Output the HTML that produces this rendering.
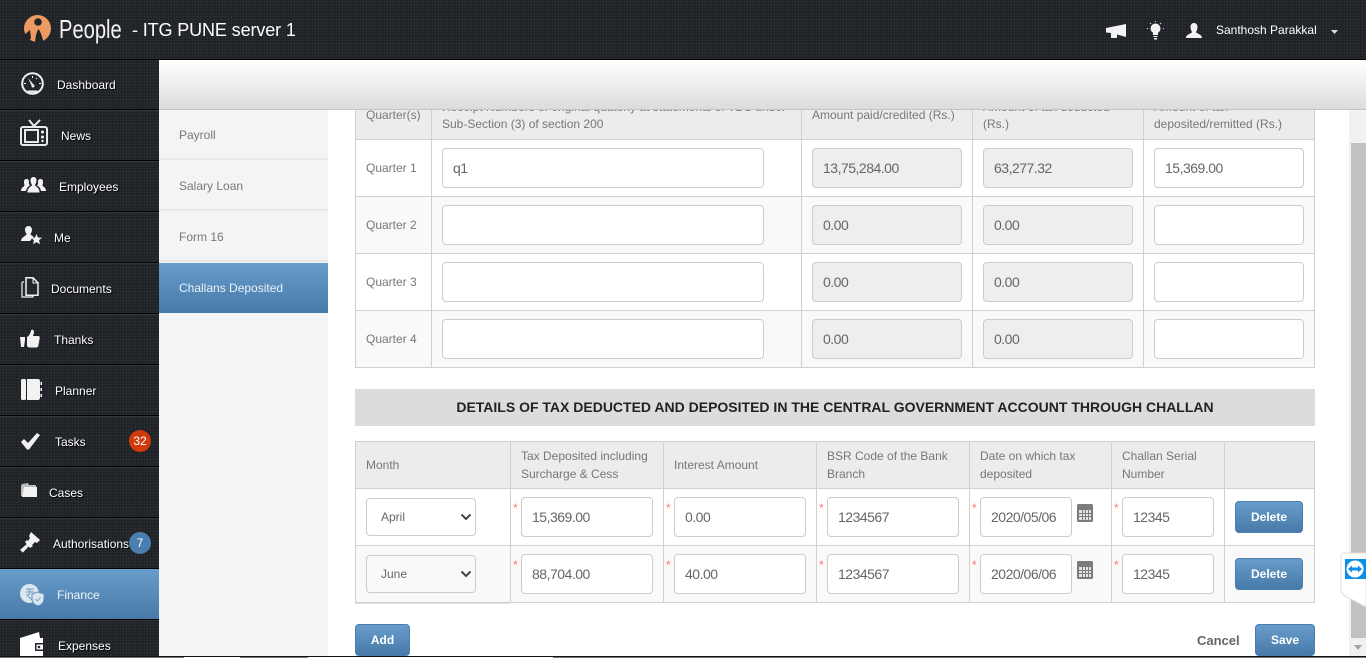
<!DOCTYPE html>
<html><head><meta charset="utf-8"><title>People</title>
<style>
*{box-sizing:border-box}
html,body{margin:0;padding:0;width:1366px;height:658px;overflow:hidden;background:#fff;font-family:"Liberation Sans",Arial,sans-serif}
.a{position:absolute}
#hd{left:0;top:0;width:1366px;height:60px;border-bottom:1px solid #000}
.tex{background-color:#212429;background-image:repeating-linear-gradient(0deg,rgba(255,255,255,.025) 0 1px,rgba(0,0,0,.07) 1px 2px,transparent 2px 3px),repeating-linear-gradient(90deg,rgba(255,255,255,.025) 0 1px,rgba(0,0,0,.07) 1px 2px,transparent 2px 3px)}
.it{left:0;width:159px;height:51px;border-bottom:1px solid #000;border-top:1px solid #33363b}
.lb{position:absolute;color:#fff;font-size:12px;line-height:14px;white-space:nowrap;text-shadow:1px 1px 1px #000}
.ic{position:absolute;fill:#f2f2f2}
.sn{left:159px;width:169px;height:50px;background:#f4f4f4;border-bottom:2px solid #e8e8e8;color:#777;font-size:12px;line-height:51px;padding-left:20px}
.blue{background:linear-gradient(#689cca,#477aa9)}
.t{position:absolute;color:#777;font-size:12px;line-height:18px;white-space:nowrap}
.inp{position:absolute;height:40px;background:#fff;border:1px solid #ccc;border-radius:4px;color:#666;font-size:14px;letter-spacing:-.5px;line-height:39px;padding-left:10px;white-space:nowrap}
.dis{background:#eee}
.st{position:absolute;color:#f77;font-size:12px;line-height:12px}
.btn{position:absolute;background:linear-gradient(#689cca,#477aa9);border:1px solid #4a7fb0;border-radius:4px;color:#fff;font-weight:bold;font-size:12px;text-align:center}
.bdg{position:absolute;left:129px;width:22px;height:22px;border-radius:50%;color:#fff;font-size:12px;line-height:22px;text-align:center}
.sel{letter-spacing:0;font-size:12px;line-height:36px;height:38px;padding-left:14px;width:110px;left:366px}
</style></head><body>

<!-- main content -->
<div class="a" style="left:328px;top:110px;width:1038px;height:546px;background:#fff"></div>

<!-- table 1 -->
<div class="a" style="left:355px;top:110px;width:960px;height:29px;background:#ececec"></div>
<div class="t" style="left:366px;top:106px">Quarter(s)</div>
<div class="t" style="left:442px;top:98px">Receipt Numbers of original quaterly at statements of TDS under</div>
<div class="t" style="left:442px;top:115px">Sub-Section (3) of section 200</div>
<div class="t" style="left:812px;top:106px">Amount paid/credited (Rs.)</div>
<div class="t" style="left:983px;top:98px">Amount of tax deducted</div>
<div class="t" style="left:983px;top:115px">(Rs.)</div>
<div class="t" style="left:1154px;top:98px">Amount of tax</div>
<div class="t" style="left:1154px;top:115px">deposited/remitted (Rs.)</div>

<div class="a" style="left:355px;top:196px;width:960px;height:57px;background:#f9f9f9"></div>
<div class="a" style="left:355px;top:310px;width:960px;height:57px;background:#f9f9f9"></div>
<div class="a" style="left:355px;top:139px;width:960px;height:1px;background:#d0d0d0"></div>
<div class="a" style="left:355px;top:196px;width:960px;height:1px;background:#d0d0d0"></div>
<div class="a" style="left:355px;top:253px;width:960px;height:1px;background:#d0d0d0"></div>
<div class="a" style="left:355px;top:310px;width:960px;height:1px;background:#d0d0d0"></div>
<div class="a" style="left:355px;top:367px;width:960px;height:1px;background:#d0d0d0"></div>
<div class="a" style="left:355px;top:110px;width:1px;height:258px;background:#d0d0d0"></div>
<div class="a" style="left:431px;top:110px;width:1px;height:258px;background:#d0d0d0"></div>
<div class="a" style="left:801px;top:110px;width:1px;height:258px;background:#d0d0d0"></div>
<div class="a" style="left:972px;top:110px;width:1px;height:258px;background:#d0d0d0"></div>
<div class="a" style="left:1143px;top:110px;width:1px;height:258px;background:#d0d0d0"></div>
<div class="a" style="left:1314px;top:110px;width:1px;height:258px;background:#d0d0d0"></div>

<div class="t" style="left:366px;top:159px">Quarter 1</div>
<div class="t" style="left:366px;top:216px">Quarter 2</div>
<div class="t" style="left:366px;top:273px">Quarter 3</div>
<div class="t" style="left:366px;top:330px">Quarter 4</div>

<div class="inp" style="left:442px;top:148px;width:322px">q1</div>
<div class="inp dis" style="left:812px;top:148px;width:150px">13,75,284.00</div>
<div class="inp dis" style="left:983px;top:148px;width:150px">63,277.32</div>
<div class="inp" style="left:1154px;top:148px;width:150px">15,369.00</div>
<div class="inp" style="left:442px;top:205px;width:322px"></div>
<div class="inp dis" style="left:812px;top:205px;width:150px">0.00</div>
<div class="inp dis" style="left:983px;top:205px;width:150px">0.00</div>
<div class="inp" style="left:1154px;top:205px;width:150px"></div>
<div class="inp" style="left:442px;top:262px;width:322px"></div>
<div class="inp dis" style="left:812px;top:262px;width:150px">0.00</div>
<div class="inp dis" style="left:983px;top:262px;width:150px">0.00</div>
<div class="inp" style="left:1154px;top:262px;width:150px"></div>
<div class="inp" style="left:442px;top:319px;width:322px"></div>
<div class="inp dis" style="left:812px;top:319px;width:150px">0.00</div>
<div class="inp dis" style="left:983px;top:319px;width:150px">0.00</div>
<div class="inp" style="left:1154px;top:319px;width:150px"></div>

<!-- banner -->
<div class="a" style="left:355px;top:389px;width:960px;height:37px;background:#dcdcdc;color:#222;font-weight:bold;font-size:14px;line-height:37px;text-align:center;white-space:nowrap">DETAILS OF TAX DEDUCTED AND DEPOSITED IN THE CENTRAL GOVERNMENT ACCOUNT THROUGH CHALLAN</div>

<!-- table 2 -->
<div class="a" style="left:355px;top:441px;width:960px;height:47px;background:#ececec"></div>
<div class="a" style="left:355px;top:545px;width:960px;height:57px;background:#f9f9f9"></div>
<div class="a" style="left:355px;top:441px;width:960px;height:1px;background:#d0d0d0"></div>
<div class="a" style="left:355px;top:488px;width:960px;height:1px;background:#d0d0d0"></div>
<div class="a" style="left:355px;top:545px;width:960px;height:1px;background:#d0d0d0"></div>
<div class="a" style="left:355px;top:602px;width:960px;height:1px;background:#d0d0d0"></div>
<div class="a" style="left:355px;top:603px;width:155px;height:1px;background:#e2e2e2"></div>
<div class="a" style="left:355px;top:441px;width:1px;height:162px;background:#d0d0d0"></div>
<div class="a" style="left:510px;top:441px;width:1px;height:162px;background:#d0d0d0"></div>
<div class="a" style="left:663px;top:441px;width:1px;height:162px;background:#d0d0d0"></div>
<div class="a" style="left:816px;top:441px;width:1px;height:162px;background:#d0d0d0"></div>
<div class="a" style="left:969px;top:441px;width:1px;height:162px;background:#d0d0d0"></div>
<div class="a" style="left:1111px;top:441px;width:1px;height:162px;background:#d0d0d0"></div>
<div class="a" style="left:1224px;top:441px;width:1px;height:162px;background:#d0d0d0"></div>
<div class="a" style="left:1314px;top:441px;width:1px;height:162px;background:#d0d0d0"></div>

<div class="t" style="left:366px;top:456px">Month</div>
<div class="t" style="left:521px;top:447px">Tax Deposited including</div>
<div class="t" style="left:521px;top:465px">Surcharge &amp; Cess</div>
<div class="t" style="left:674px;top:456px">Interest Amount</div>
<div class="t" style="left:827px;top:447px">BSR Code of the Bank</div>
<div class="t" style="left:827px;top:465px">Branch</div>
<div class="t" style="left:980px;top:447px">Date on which tax</div>
<div class="t" style="left:980px;top:465px">deposited</div>
<div class="t" style="left:1122px;top:447px">Challan Serial</div>
<div class="t" style="left:1122px;top:465px">Number</div>

<!-- row 1 -->
<div class="inp sel" style="top:498px;background:#fff">April<svg class="a" style="left:93px;top:14px" width="12" height="8" viewBox="0 0 12 8"><path d="M1.500 1.500L6 6l4.500-4.500" fill="none" stroke="#444" stroke-width="2"/></svg></div>
<div class="st" style="left:513px;top:502px">*</div><div class="inp" style="left:521px;top:497px;width:132px">15,369.00</div>
<div class="st" style="left:666px;top:502px">*</div><div class="inp" style="left:674px;top:497px;width:132px">0.00</div>
<div class="st" style="left:819px;top:502px">*</div><div class="inp" style="left:827px;top:497px;width:132px">1234567</div>
<div class="st" style="left:972px;top:502px">*</div><div class="inp" style="left:980px;top:497px;width:92px">2020/05/06</div>
<svg class="a" style="left:1077px;top:504px" width="16" height="18" viewBox="0 0 16 18"><rect width="16" height="18" rx="1.500" fill="#7c7c7c"/><g fill="#e4e4e4"><rect x="2" y="6" width="12" height="10"/></g><g stroke="#7c7c7c" stroke-width="1"><path d="M5.500 6v10M8.500 6v10M11.500 6v10M2 9.500h12M2 12.500h12"/></g></svg>
<div class="st" style="left:1114px;top:502px">*</div><div class="inp" style="left:1122px;top:497px;width:92px">12345</div>
<div class="btn" style="left:1235px;top:501px;width:68px;height:32px;line-height:30px">Delete</div>

<!-- row 2 -->
<div class="inp sel" style="top:555px;background:#f9f9f9">June<svg class="a" style="left:93px;top:14px" width="12" height="8" viewBox="0 0 12 8"><path d="M1.500 1.500L6 6l4.500-4.500" fill="none" stroke="#444" stroke-width="2"/></svg></div>
<div class="st" style="left:513px;top:559px">*</div><div class="inp" style="left:521px;top:554px;width:132px">88,704.00</div>
<div class="st" style="left:666px;top:559px">*</div><div class="inp" style="left:674px;top:554px;width:132px">40.00</div>
<div class="st" style="left:819px;top:559px">*</div><div class="inp" style="left:827px;top:554px;width:132px">1234567</div>
<div class="st" style="left:972px;top:559px">*</div><div class="inp" style="left:980px;top:554px;width:92px">2020/06/06</div>
<svg class="a" style="left:1077px;top:561px" width="16" height="18" viewBox="0 0 16 18"><rect width="16" height="18" rx="1.500" fill="#7c7c7c"/><g fill="#e4e4e4"><rect x="2" y="6" width="12" height="10"/></g><g stroke="#7c7c7c" stroke-width="1"><path d="M5.500 6v10M8.500 6v10M11.500 6v10M2 9.500h12M2 12.500h12"/></g></svg>
<div class="st" style="left:1114px;top:559px">*</div><div class="inp" style="left:1122px;top:554px;width:92px">12345</div>
<div class="btn" style="left:1235px;top:558px;width:68px;height:32px;line-height:30px">Delete</div>

<div class="btn" style="left:355px;top:624px;width:55px;height:32px;line-height:30px">Add</div>
<div class="a" style="left:1197px;top:632px;color:#666;font-weight:bold;font-size:13px;line-height:18px">Cancel</div>
<div class="btn" style="left:1255px;top:624px;width:60px;height:32px;line-height:30px">Save</div>

<!-- top bar -->
<div class="a" style="left:159px;top:60px;width:1207px;height:50px;background:linear-gradient(#fff,#dcdcdc);border-bottom:1px solid #c4c4c4"></div>

<!-- scrollbar -->
<div class="a" style="left:1349px;top:110px;width:17px;height:546px;background:#f1f1f1"></div>
<div class="a" style="left:1351px;top:143px;width:15px;height:495px;background:#c1c1c1"></div>
<svg class="a" style="left:1351px;top:644px" width="15" height="8"><path d="M3 1h8L7 6z" fill="#a3a3a3"/></svg>

<!-- teamviewer tab -->
<svg class="a" style="left:1340px;top:552px" width="26" height="56" viewBox="0 0 26 56"><path d="M26 1H4Q1 1 1 4V40L5 44 26 55z" fill="#fff" stroke="#ddd"/><rect x="5" y="7" width="21" height="20" fill="#0e8ee9"/><circle cx="15" cy="17" r="8.500" fill="#fff"/><path d="M8 17l4-3.500v2h6v-2l4 3.500-4 3.500v-2h-6v2z" fill="#0e8ee9"/></svg>

<!-- header -->
<div id="hd" class="a tex">
<svg class="a" style="left:24px;top:15px" width="27" height="27" viewBox="0 0 27 27"><circle cx="13.500" cy="13.500" r="13.500" fill="#ee9a63"/><circle cx="14" cy="7" r="3.800" fill="#212429"/><path d="M0 20L6 15 7 23 4 27H0z" fill="#212429"/><path d="M11 27Q12 17 14.500 14 17 17 19.500 27z" fill="#212429"/></svg>
<div class="a" style="left:59px;top:14px;color:#f2f2f2;font-size:26px;line-height:30px;transform:scaleX(.775);transform-origin:0 0">People</div>
<div class="a" style="left:132px;top:19px;color:#fff;font-size:18px;line-height:22px;white-space:nowrap;letter-spacing:-.12px">- ITG PUNE server 1</div>
<svg class="a" style="left:1106px;top:24px" width="21" height="15" viewBox="0 0 21 15"><path fill="#f2f2f2" d="M0 4l20-4v13L11 10.500V14H5V9L0 8.500z"/></svg>
<svg class="a" style="left:1147px;top:21px" width="17" height="20" viewBox="0 0 17 20"><circle cx="8.500" cy="7.500" r="5" fill="#f2f2f2"/><path d="M6 11h5v3H6zM6.500 15h4v1h-4zM7 17h3v1.500H7z" fill="#f2f2f2"/><path d="M8.500 0v1M1 7.500H0M17 7.500h-1M3 2l1 1M14 2l-1 1" stroke="#ddd"/></svg>
<svg class="a" style="left:1186px;top:23px" width="16" height="15" viewBox="0 0 16 15"><path fill="#f2f2f2" d="M8 0c2.500 0 3.500 2 3.500 4S10.500 8 10 9c0 1.500 6 2 6 6H0c0-4 6-4.500 6-6-.5-1-1.500-3-1.500-5S5.500 0 8 0z"/></svg>
<div class="a" style="left:1216px;top:23px;color:#fff;font-size:12px;line-height:14px;white-space:nowrap">Santhosh Parakkal</div>
<svg class="a" style="left:1331px;top:30px" width="7" height="5"><path d="M0 0h7L3.500 4z" fill="#ddd"/></svg>
</div>

<!-- sidebar -->
<div class="a tex" style="left:0;top:60px;width:159px;height:596px"></div>
<div class="a it tex" style="top:60px;height:50px;border-top:0"></div>
<div class="a it tex" style="top:110px"></div>
<div class="a it tex" style="top:161px"></div>
<div class="a it tex" style="top:212px"></div>
<div class="a it tex" style="top:263px"></div>
<div class="a it tex" style="top:314px"></div>
<div class="a it tex" style="top:365px"></div>
<div class="a it tex" style="top:416px"></div>
<div class="a it tex" style="top:467px"></div>
<div class="a it tex" style="top:518px"></div>
<div class="a it blue" style="top:569px;border-top:0"></div>
<div class="a tex" style="left:0;top:620px;width:159px;height:36px;border-top:1px solid #33363b"></div>

<div class="lb" style="left:57px;top:78px">Dashboard</div>
<svg class="ic" style="left:21px;top:72px" width="23" height="23" viewBox="0 0 23 23"><circle cx="11.500" cy="11.500" r="10.300" fill="none" stroke="#f2f2f2" stroke-width="2"/><path d="M7 6l6 7-2 1.500z"/><circle cx="12" cy="14" r="1.500"/><path d="M6 18.500h11l-1.500 2h-8z"/><path d="M11.500 4v2M5 11.500H3M20 11.500h-2M16 6l-1 1" stroke="#f2f2f2"/></svg>

<div class="lb" style="left:61px;top:129px">News</div>
<svg class="ic" style="left:20px;top:119px" width="28" height="27" viewBox="0 0 28 27"><rect x="1" y="8" width="26" height="18" rx="2" fill="#22252a" stroke="#e6eaf0" stroke-width="2"/><rect x="5" y="11" width="13" height="12" fill="none" stroke="#e6eaf0" stroke-width="2"/><circle cx="22.500" cy="13" r="1.500"/><circle cx="22.500" cy="18" r="1.500"/><circle cx="22.500" cy="22" r="1.200"/><path d="M9 1l5 6 6-6" fill="none" stroke="#e6eaf0" stroke-width="2"/></svg>

<div class="lb" style="left:59px;top:180px">Employees</div>
<svg class="ic" style="left:21px;top:177px" width="25" height="16" viewBox="0 0 25 16"><path d="M12.500 0c2 0 3 1.500 3 3.500s-1 3.500-1.500 4.500c0 1.500 4.500 2 4.500 7.500H6.500C6.500 10 11 9.500 11 8c-.5-1-1.500-2.500-1.500-4.500S10.500 0 12.500 0zM5.500 2C7 2 8 3 8 4.500 7.500 6.500 8.500 8 9 8.500 7 9.500 5.500 11 5 14H0c0-4 3.500-4 3.500-6C3 7 3 6 3 4.500 3 3 4 2 5.500 2zM19.500 2C21 2 22 3 22 4.500c0 1.500 0 2.500-.5 3.500 0 2 3.500 2 3.500 6h-5c-.5-3-2-4.500-4-5.500.5-.5 1.500-2 1-4C17 3 18 2 19.500 2z"/></svg>

<div class="lb" style="left:54px;top:231px">Me</div>
<svg class="ic" style="left:21px;top:226px" width="21" height="19" viewBox="0 0 21 19"><path d="M7.500 0C10 0 11 2 11 4s-1 3-1.500 4c0 1 1.500 1.500 3 2.500L9 15H0c0-4 5.500-5 5.500-7C5 7 4 6 4 4s1-4 3.500-4z"/><path d="M15.500 8l1.500 3.500 4 .3-3 2.500 1 4-3.500-2.200L12 18.300l1-4-3-2.500 4-.3z"/></svg>

<div class="lb" style="left:51px;top:282px">Documents</div>
<svg class="ic" style="left:21px;top:277px" width="18" height="21" viewBox="0 0 18 21"><path d="M1 5h2M1 5v15h11v-1" fill="none" stroke="#f2f2f2" stroke-width="1.200"/><path d="M5 .8h7l5 5v12.500H5z" fill="none" stroke="#f2f2f2" stroke-width="1.500"/><path d="M12 1v5h5" fill="none" stroke="#f2f2f2"/></svg>

<div class="lb" style="left:54px;top:333px">Thanks</div>
<svg class="ic" style="left:20px;top:329px" width="20" height="19" viewBox="0 0 20 19"><path d="M0 8h5v3l-1 7H1z"/><path d="M7 8c2-1 3-3 4-6 0-2 3-2 3 1 0 2-1 3-1 4h5c2 0 2 2 1.500 3l-1 6c0 1.500-1 2.500-2.500 2.500H10c-2 0-3-1-3-2z"/></svg>

<div class="lb" style="left:55px;top:384px">Planner</div>
<svg class="ic" style="left:21px;top:379px" width="21" height="21" viewBox="0 0 21 21"><rect x="0" y="0" width="5" height="21" rx="1.500"/><path d="M6 0h11c1 0 2 1 2 2v17c0 1-1 2-2 2H6z"/><path d="M19.500 3h1.500v3h-1.500zM19.500 9h1.500v3h-1.500zM19.500 15h1.500v3h-1.500z"/></svg>

<div class="lb" style="left:55px;top:435px">Tasks</div>
<svg class="ic" style="left:21px;top:433px" width="19" height="17" viewBox="0 0 19 17"><path d="M0 9l3-3 4 4L16 0l3 2L8 16.500H6z"/></svg>
<div class="bdg" style="top:430px;background:#d13a0b">32</div>

<div class="lb" style="left:49px;top:486px">Cases</div>
<svg class="ic" style="left:21px;top:482px" width="16" height="15" viewBox="0 0 16 15"><path d="M1 2l6-1 1 2h7v2H4L2 14H0V4z" fill="#bbb"/><path d="M3 5h13v10H1z"/></svg>

<div class="lb" style="left:53px;top:537px">Authorisations</div>
<svg class="ic" style="left:20px;top:532px" width="21" height="21" viewBox="0 0 21 21"><path d="M11 0l9 8-3 3-2-1-3 3 1 1-3 2-5-6 2-2 1 1 2-3-1-2z"/><path d="M8 11l2 2-7 7.500L0 18z"/></svg>
<div class="bdg" style="top:532px;background:#4a7eb0">7</div>

<div class="lb" style="left:57px;top:588px;text-shadow:none;color:#eef3f8">Finance</div>
<svg class="ic" style="left:20px;top:584px" width="25" height="22" viewBox="0 0 25 22"><circle cx="9.500" cy="9.500" r="9.500" fill="#dce6ee"/><path d="M6 5h8M6 8h8M7 5c4 0 4 6 0 6l5 5" fill="none" stroke="#7fa6ca" stroke-width="1.200"/><path d="M18 8l6 2v5c0 4-3 6-6 7-3-1-6-3-6-7v-5z" fill="#dce6ee" stroke="#5f8fbd"/><path d="M15.500 15l2 2 3-3.500" fill="none" stroke="#7fa6ca"/></svg>

<div class="lb" style="left:58px;top:639px">Expenses</div>
<svg class="ic" style="left:20px;top:632px" width="24" height="24" viewBox="0 0 24 24"><path d="M0 6L19 0l1 6H23V24H0z" fill="#fff"/><path d="M15 11h8v8h-8z" fill="#22252a"/><rect x="16.500" y="12.500" width="6.500" height="5" fill="#fff"/><circle cx="19" cy="15" r="1.300" fill="#22252a"/></svg>

<!-- subnav -->
<div class="a" style="left:159px;top:110px;width:169px;height:546px;background:#f4f4f4"></div>
<div class="a sn" style="top:110px">Payroll</div>
<div class="a sn" style="top:161px">Salary Loan</div>
<div class="a sn" style="top:212px">Form 16</div>
<div class="a sn blue" style="top:263px;color:#eaf1f7;border-bottom:0">Challans Deposited</div>

<!-- bottom strip -->
<div class="a" style="left:0;top:656px;width:1366px;height:1px;background:#111"></div>
<div class="a" style="left:0;top:657px;width:184px;height:1px;background:#777"></div>
<div class="a" style="left:240px;top:657px;width:68px;height:1px;background:#777"></div>
<div class="a" style="left:553px;top:657px;width:813px;height:1px;background:#777"></div>

</body></html>
